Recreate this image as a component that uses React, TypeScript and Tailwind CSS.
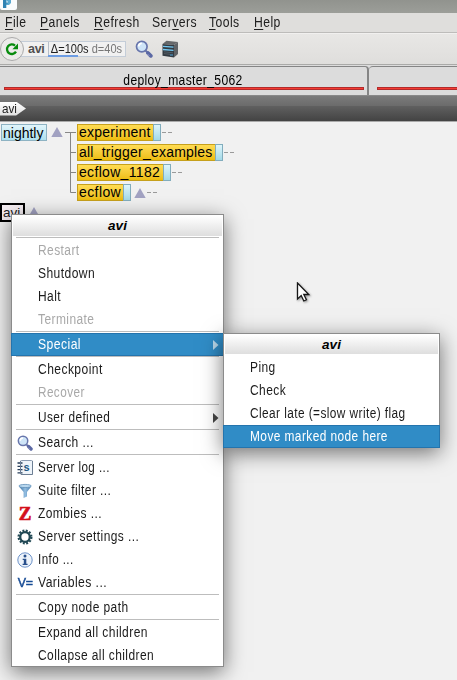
import React from 'react';

const Magnifier = ({ size }: { size: number }) => (
  <svg width={size} height={size} viewBox="0 0 18 18">
    <path d="M10.5 10.5L12.5 12.5" stroke="#6672a6" strokeWidth="2" />
    <path d="M13 13l2.8 2.8" stroke="#5b68a4" strokeWidth="3.8" strokeLinecap="round" />
    <path d="M12.5 14l2 2" stroke="#8d97c5" strokeWidth="1" />
    <circle cx="6.8" cy="6.6" r="5.3" fill="#cfe5f8" stroke="#6876ac" strokeWidth="1.7" />
    <path d="M3.6 6.4a3.2 3.2 0 0 1 3.2-3" stroke="#fff" strokeWidth="1.8" fill="none" />
  </svg>
);

const LogIcon = () => (
  <svg width="17" height="17" viewBox="0 0 17 17">
    <rect x="3.5" y="1.5" width="12" height="14" rx="1" fill="#eef4fa" stroke="#8a9bb0" />
    <path d="M15.5 2v13.5H4" stroke="#6d7f94" fill="none" />
    <path d="M0.5 4h5M0.5 7.3h5M0.5 10.6h5M0.5 13.9h5" stroke="#263d59" strokeWidth="1.3" />
    <path d="M3.5 2v13" stroke="#6c7f96" />
    <text x="6.6" y="11.8" fontSize="11" fontWeight="700" fontFamily="Liberation Sans, sans-serif" fill="#215783">s</text>
  </svg>
);

const FilterIcon = () => (
  <svg width="16" height="16" viewBox="0 0 16 16">
    <defs>
      <linearGradient id="funnel"><stop stopColor="#336b9d" /><stop offset=".5" stopColor="#94bfe2" /><stop offset="1" stopColor="#477cad" /></linearGradient>
    </defs>
    <path d="M2 3.5l4.6 5.5v6l3.4-1.5V9l4.2-5.5z" fill="url(#funnel)" />
    <ellipse cx="8.1" cy="3" rx="6.2" ry="1.6" fill="#bad8ee" stroke="#5f8fb9" strokeWidth=".8" />
  </svg>
);

const GearIcon = () => (
  <svg width="16" height="16" viewBox="0 0 16 16">
    <circle cx="8" cy="8" r="6.4" fill="none" stroke="#214854" strokeWidth="2.2" strokeDasharray="1.9 1.451" />
    <circle cx="8" cy="8" r="4.8" fill="#fff" stroke="#214854" strokeWidth="2.3" />
  </svg>
);

const InfoIcon = () => (
  <svg width="16" height="16" viewBox="0 0 16 16">
    <circle cx="8" cy="8" r="7.2" fill="#edf3fa" stroke="#6b91c8" />
    <circle cx="8" cy="4" r="1.5" fill="#284f8b" />
    <path d="M5.7 6.7h3.6v5.1h1.3v1.2H5.6v-1.2h1.2V7.9H5.7z" fill="#284f8b" />
  </svg>
);

const Zombie = () => <span className="font-['Liberation_Serif',serif] text-[19px] leading-4 font-bold text-[#d4101b] [-webkit-text-stroke:0.7px_#d4101b]">Z</span>;
const Variable = () => <span className="inline-block scale-x-[0.92] text-[13.5px] leading-4 text-[#174b95] [-webkit-text-stroke:0.5px_#174b95] tracking-[-0.3px]">V=</span>;

const Server = () => (
  <svg width="17" height="18" viewBox="0 0 17 18">
    <path d="M0.5 4l4-3.2L16 2l-4 3z" fill="#66686a" />
    <path d="M0.5 4L12 5v12.5L0.5 15.8z" fill="#343b42" />
    <path d="M12 5l4-3v12l-4 3.5z" fill="#606366" />
    <path d="M1 6.3l10.5.9M1 9.5l10.5.9" stroke="#74caf4" strokeWidth="1.3" />
    <path d="M2 11.8l9 1M2 13.6l6 .7" stroke="#5e6870" strokeWidth=".7" />
    <path d="M8 15h3" stroke="#54aadd" />
  </svg>
);

type ItemProps = { label: string; fit?: string; icon?: React.ReactNode; disabled?: boolean; active?: boolean; arrow?: boolean };
const Item = ({ label, fit = 'scale-x-[0.855]', icon, disabled, active, arrow }: ItemProps) => (
  <div className={`flex h-[23px] shrink-0 items-center text-[14px] leading-[23px] whitespace-pre ${active ? '-mx-px border border-[#2474ad] bg-[#308cc6] text-white' : disabled ? 'text-[#a8a8a8]' : 'text-[#1b1b1b]'}`}>
    <span className="flex h-4 w-[26px] shrink-0 items-center justify-center">{icon}</span>
    <span className={`${fit} flex-1 origin-left tracking-[0.5px]`}>{label}</span>
    {arrow && <svg className="mr-1 shrink-0" width="6" height="10" viewBox="0 0 6 10"><path d="M0 0l5.5 5L0 10z" fill={active ? '#b9d8eb' : '#464646'} /></svg>}
  </div>
);
const Separator = () => <div className="mx-1 h-[2px] shrink-0 border-t border-[#bdbdbd]" />;
const MenuTitle = ({ className }: { className: string }) => (
  <div className={`mx-px mt-px shrink-0 bg-linear-to-b from-white to-[#dedede] text-center text-[13.5px] font-bold italic text-black ${className}`}>avi</div>
);

const Marker = ({ className = '' }: { className?: string }) => (
  <svg className={`shrink-0 ${className}`} width="12" height="10" viewBox="0 0 12 10"><path d="M6 0l5.7 10H.3z" fill="#a2a2c2" /></svg>
);
const Dashes = () => <span className="ml-px flex gap-[2px]"><i className="h-px w-1 bg-[#9a9a9a]" /><i className="h-px w-1 bg-[#9a9a9a]" /></span>;

const nodes = [
  { name: 'experiment', width: 'w-[77px]', tracking: 'tracking-[0.25px]' },
  { name: 'all_trigger_examples', width: 'w-[139px]', tracking: 'tracking-[0.22px]' },
  { name: 'ecflow_1182', width: 'w-[87px]', tracking: 'tracking-[0.32px]' },
  { name: 'ecflow', width: 'w-[47px]', tracking: 'tracking-[0.4px]' },
];

const commands = [
  { lead: '', key: 'F', rest: 'ile', width: 'w-[35px]' },
  { lead: '', key: 'P', rest: 'anels', width: 'w-[54px]' },
  { lead: '', key: 'R', rest: 'efresh', width: 'w-[58px]' },
  { lead: 'Ser', key: 'v', rest: 'ers', width: 'w-[57px]' },
  { lead: '', key: 'T', rest: 'ools', width: 'w-[45px]' },
  { lead: '', key: 'H', rest: 'elp', width: 'w-[40px]' },
];

export default function App() {
  return (
    <div className="relative flex h-[680px] w-[457px] flex-col overflow-hidden bg-[#f1f1f1] font-['Liberation_Sans',Arial,sans-serif] text-[13px] text-[#202020]">
      <header className="h-[13px] shrink-0 overflow-hidden bg-linear-to-b from-[#91938e] to-[#9c9e99]">
        <svg width="18" height="10" viewBox="0 0 18 10"><path d="M0 0h17v8q0 2-2 2H2Q0 10 0 8z" fill="#fafcfd" /><path d="M3 0v8h3.3V5H9V2.5H6.3V0z" fill="#2f83b3" /><path d="M6.3 0H11v3L9 5H6.3V3.5H8V1.5H6.3z" fill="#5aa9d0" /></svg>
      </header>
      <nav className="flex h-[20px] shrink-0 border-b border-[#bdbcba] bg-[#dfdedc] pl-[5px] text-[14px] leading-[19px]">
        {commands.map(({ lead, key, rest, width }) => (
          <span key={key} className={`${width} shrink-0`}>
            <span className="inline-block origin-left scale-x-[0.87] tracking-[0.5px] whitespace-nowrap">{lead}<u className="decoration-1 underline-offset-2">{key}</u>{rest}</span>
          </span>
        ))}
      </nav>
      <div className="flex h-8 shrink-0 items-center border-t border-b border-t-[#f1f0ef] border-b-[#aaaaa8] bg-linear-to-b from-[#e8e7e5] to-[#dfdedc]">
        <span className="z-10 flex h-6 w-6 shrink-0 items-center justify-center rounded-full border border-[#aaa] bg-[#ecebea]">
          <svg width="16" height="16" viewBox="0 0 16 16"><path d="M12 10.6A4.8 4.8 0 1 1 11 4.6" fill="none" stroke="#078b0d" strokeWidth="2.3" /><path d="M14 2.6v5.6H8.4z" fill="#078b0d" /></svg>
        </span>
        <div className="-ml-1 flex h-[16px] w-[106px] shrink-0 border border-[#c4cdd8] bg-[#f1f1f1] text-[12px] leading-[14px]">
          <b className="w-[28px] shrink-0 border-r border-[#b6bec8] pl-[7px] text-[12.5px] tracking-[-0.3px] text-[#515151]">avi</b>
          <span className="relative w-[76px] whitespace-nowrap"><span className="inline-block origin-left scale-x-[0.92] pl-[2px]">Δ=100s <span className="text-[#777]">d=40s</span></span><i className="absolute bottom-[-1px] left-[-1px] h-[2px] w-[30px] bg-[#6d9de4]" /></span>
        </div>
        <span className="ml-[9px]"><Magnifier size={18} /></span>
        <span className="ml-[9px]"><Server /></span>
      </div>
      <div className="flex h-[30px] shrink-0 bg-[#dcdcdc] pt-px">
        <div className="flex w-[369px] shrink-0 flex-col rounded-tr border-t border-r-2 border-[#858585]">
          <span className="h-[20px] pr-[2px] text-center text-[14px] leading-[26px] text-black"><span className="inline-block scale-x-[0.865] tracking-[0.4px]">deploy_master_5062</span></span>
          <i className="ml-1 mr-[3px] h-[3px] shrink-0 border border-[#b32b2b] bg-[#f63b32]" />
        </div>
        <div className="flex flex-1 flex-col rounded-tl border-t border-[#858585] pt-[20px]"><i className="ml-2 h-[3px] border-y border-l border-[#b32b2b] bg-[#f63b32]" /></div>
      </div>
      <div className="flex h-[27px] shrink-0 items-center border-t border-b border-t-[#898989] border-b-[#aaa] bg-[linear-gradient(#7b7b7b,#6b6b6b_40%,#606060_40%,#434343)]">
        <span className="h-[14px] w-[26px] bg-linear-to-b from-white to-[#dedede] pl-[2px] text-[13px] leading-[14px] [clip-path:polygon(0_0,62%_0,100%_50%,62%_100%,0_100%)]"><span className="inline-block origin-left scale-x-[0.9]">avi</span></span>
      </div>
      <main className="flex h-[85px] shrink-0 pt-[2px] text-[14px] text-black">
        <div className="flex w-[70px] shrink-0 items-start pl-[1px]">
          <span className="h-[17px] w-[46px] shrink-0 border border-[#8eb3c3] bg-linear-to-b from-[#e1f5fb] to-[#aee0ee] pl-px leading-[16px]">nightly</span>
          <Marker className="ml-1 mt-[3px]" />
          <i className="ml-[2px] mt-2 h-px flex-1 bg-[#888]" />
        </div>
        <div className="flex flex-col gap-[3px]">
          {nodes.map((node, index) => (
            <div className="flex h-[17px] items-center" key={node.name}>
              <svg className="-my-[2px] shrink-0" width="7" height="21"><path d={index === 0 ? 'M0 10.5h6M.5 10v11' : index === 3 ? 'M.5 0v10.5H6' : 'M.5 0v21M0 10.5h6'} stroke="#858585" fill="none" /></svg>
              <span className={`${node.width} ${node.tracking} h-full shrink-0 border border-[#c6a01c] bg-linear-to-b from-[#ffdc52] to-[#edbd08] pl-px leading-[15px] whitespace-nowrap`}>{node.name}</span>
              <i className="-ml-px h-full w-2 border border-[#82adbd] bg-linear-to-b from-[#def5fb] to-[#a3d9e7]" />
              {node.name === 'ecflow' && <Marker className="ml-[3px]" />}
              <Dashes />
            </div>
          ))}
        </div>
      </main>
      <div className="-mt-[4px] flex h-[18px] items-start">
        <span className="h-[19px] w-[25px] border-2 border-black bg-[#f5eef2] pl-px text-[13.5px] leading-[16px]">avi</span><Marker className="ml-[3px] mt-1" />
      </div>
      <svg className="absolute left-[296px] top-[282px] drop-shadow-[1px_1px_1px_#00000066]" width="16" height="21" viewBox="0 0 16 21"><path d="M1.5 1v16l3.7-3.5 2.6 5.5 2.6-1.2-2.6-5.3h5z" fill="#fff" stroke="#171717" strokeWidth="1.3" /></svg>

      <section className="absolute left-[11px] top-[214px] flex h-[453px] w-[213px] flex-col border border-[#8b8b8b] bg-white shadow-[0_5px_20px_#00000088]">
        <MenuTitle className="mb-px h-[20px] leading-[20px]" />
        <Separator />
        <Item label="Restart" disabled /><Item label="Shutdown" fit="scale-x-[0.862]" /><Item label="Halt" /><Item label="Terminate" disabled />
        <Separator />
        <Item label="Special" active arrow fit="scale-x-[0.87]" />
        <Separator />
        <Item label="Checkpoint" fit="scale-x-[0.862]" /><Item label="Recover" disabled fit="scale-x-[0.84]" />
        <Separator />
        <Item label="User defined" arrow fit="scale-x-[0.845]" />
        <Separator />
        <Item label="Search ..." icon={<Magnifier size={16} />} fit="scale-x-[0.86]" />
        <Separator />
        <Item label="Server log ..." icon={<LogIcon />} fit="scale-x-[0.832]" />
        <Item label="Suite filter ..." icon={<FilterIcon />} />
        <Item label="Zombies ..." icon={<Zombie />} />
        <Item label="Server settings ..." icon={<GearIcon />} />
        <Item label="Info ..." icon={<InfoIcon />} fit="scale-x-[0.83]" />
        <Item label="Variables ..." icon={<Variable />} fit="scale-x-[0.87]" />
        <Separator />
        <Item label="Copy node path" />
        <Separator />
        <Item label="Expand all children" fit="scale-x-[0.86]" /><Item label="Collapse all children" />
      </section>
      <section className="absolute left-[223px] top-[333px] flex h-[115px] w-[217px] flex-col border border-[#8b8b8b] bg-white shadow-[0_5px_20px_#00000088]">
        <MenuTitle className="mb-[2px] h-[19px] leading-[19px]" />
        <Item label="Ping" /><Item label="Check" /><Item label="Clear late (=slow write) flag" fit="scale-x-[0.847]" /><Item label="Move marked node here" active fit="scale-x-[0.85]" />
      </section>
    </div>
  );
}
